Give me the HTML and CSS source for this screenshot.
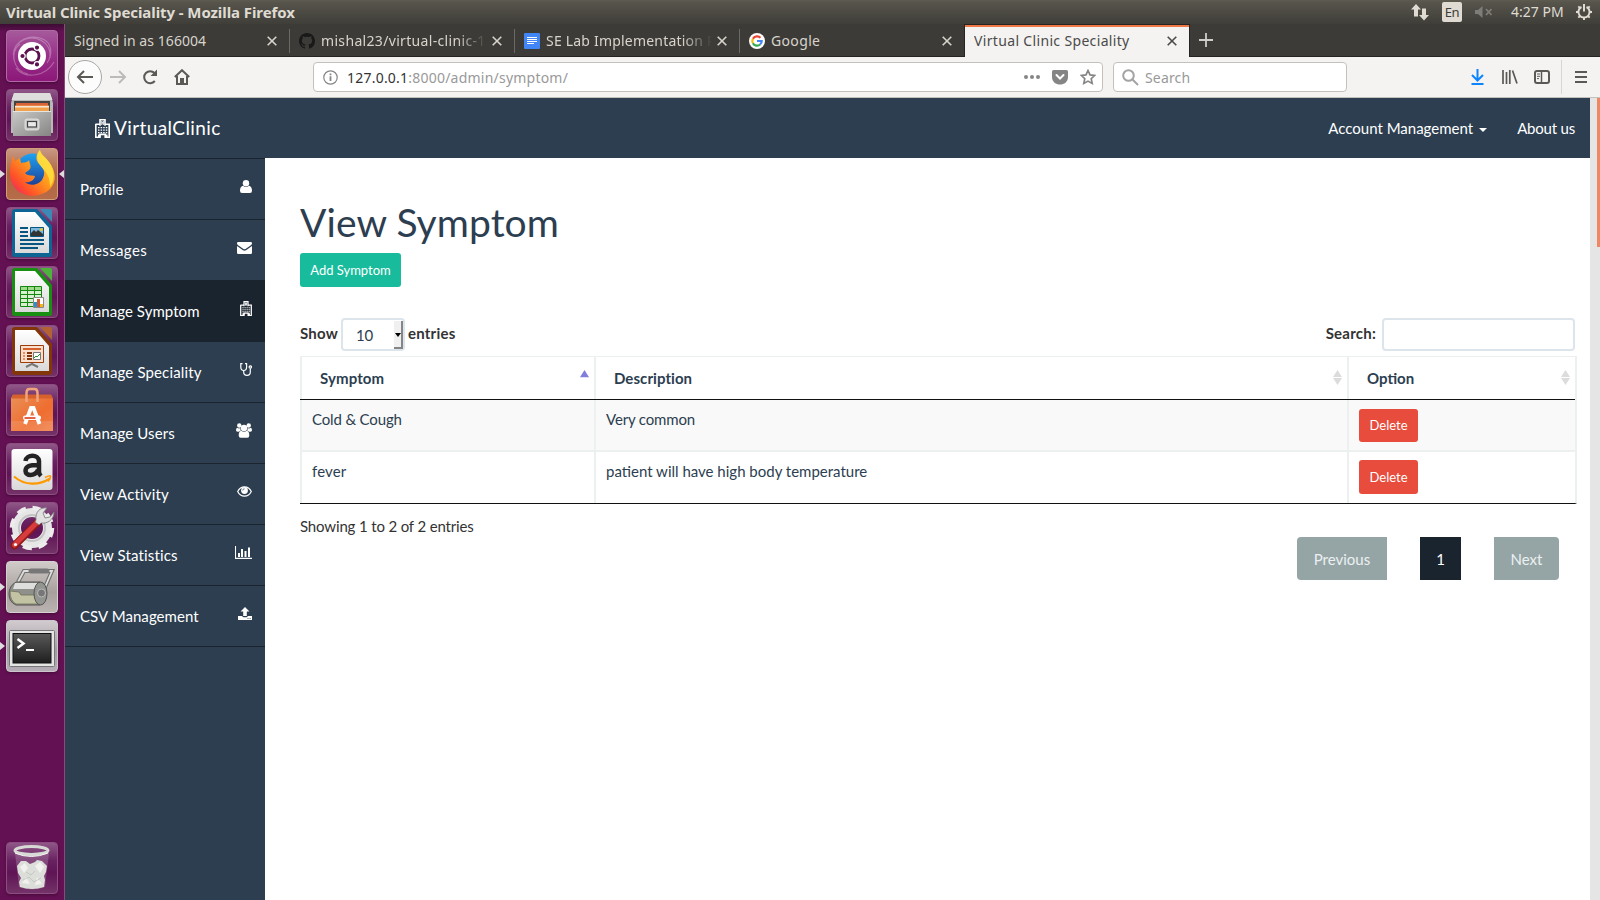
FILE: index.html
```html
<!DOCTYPE html>
<html lang="en">
<head>
<meta charset="utf-8">
<title>Virtual Clinic Speciality</title>
<link rel="stylesheet" href="styles.css">
</head>
<body>
<svg width="0" height="0" class="defs">
  <defs>
    <linearGradient id="gloss" x1="0" y1="0" x2="0" y2="1"><stop offset="0" stop-color="#fff"/><stop offset="1" stop-color="#d9d9d9"/></linearGradient>
    <linearGradient id="steel" x1="0" y1="0" x2="1" y2="1"><stop offset="0" stop-color="#c9c9c7"/><stop offset="1" stop-color="#858583"/></linearGradient>
    <linearGradient id="fox" x1="1" y1="0" x2="0" y2="1"><stop offset="0" stop-color="#ffe43a"/><stop offset=".45" stop-color="#ff9a1c"/><stop offset=".75" stop-color="#ff4f2a"/><stop offset="1" stop-color="#e6177d"/></linearGradient>
    <linearGradient id="globe" x1="0" y1="0" x2="0" y2="1"><stop offset="0" stop-color="#1fa3f3"/><stop offset="1" stop-color="#1b2f86"/></linearGradient>
    <linearGradient id="bag" x1="0" y1="0" x2="1" y2="1"><stop offset="0" stop-color="#e8925a"/><stop offset=".6" stop-color="#ef6d2f"/><stop offset="1" stop-color="#ee7f4b"/></linearGradient>
    <linearGradient id="screen" x1="0" y1="0" x2="0" y2="1"><stop offset="0" stop-color="#595959"/><stop offset="1" stop-color="#1f1f1f"/></linearGradient>
    <symbol id="x" viewBox="0 0 10 10"><path d="M.7.7l8.6 8.6M9.3.7L.7 9.3" fill="none" stroke="currentColor" stroke-width="1.6"/></symbol>
    <symbol id="hospital" viewBox="0 0 15 19">
      <path d="M.8 5.2h4M10.2 5.2h4v13.2h-4v-3H5v3H.8V4.8M5 6.800V.8h5v6" fill="none" stroke="currentColor" stroke-width="1.6"/>
      <path d="M6.300 2h.9v1.300h.7V2h.9v4h-.9V4.400h-.7V6h-.9zM3 8h1.500v1.300H3zm2.600 0h1.500v1.300H5.600zm2.600 0h1.500v1.300H8.200zm2.600 0h1.500v1.300h-1.500zM3 10.500h1.500v1.300H3zm2.600 0h1.500v1.300H5.600zm2.600 0h1.500v1.300H8.200zm2.600 0h1.500v1.300h-1.500zM3 13h1.500v1.300H3zm2.600 0h1.500v1.300H5.600zm2.600 0h1.500v1.300H8.200zm2.600 0h1.500v1.300h-1.500zM3 15.500h2.500v2.500H3zm7 0h2.500v2.500H10z" fill="currentColor"/>
    </symbol>
  </defs>
</svg>

<header class="panel">
  <span class="panel-title">Virtual Clinic Speciality - Mozilla Firefox</span>
  <div class="indicators">
    <svg class="i-net" width="18" height="17" viewBox="0 0 18 17" fill="#dfdbd2"><path d="M5 0l5 5.500H7v7H3v-7H0zM13 16.500l5-5.500h-3V4.500h-4V11H8z"/></svg>
    <span class="i-lang">En</span>
    <svg class="i-vol" width="18" height="12" viewBox="0 0 18 12"><path d="M0 4h3l4.500-4v12L3 8H0z" fill="#7f7d77"/><path d="M11 3l5.500 6M16.500 3L11 9" stroke="#7f7d77" stroke-width="1.800"/></svg>
    <span class="i-time">4:27 PM</span>
    <svg class="i-gear" width="16" height="16" viewBox="0 0 16 16" fill="none" stroke="#dfdbd2"><path d="M5.500 3A5.600 5.600 0 1 0 10.500 3" stroke-width="2"/><path d="M8 0v7.500" stroke-width="2"/><path d="M2.300 2.300l1.900 1.900M13.700 2.300l-1.900 1.900M0 8h2.500M16 8h-2.500M2.300 13.700l1.900-1.900M13.700 13.700l-1.900-1.900M8 16v-2.500" stroke-width="1.900"/></svg>
  </div>
</header>

<div class="desktop">
  <nav class="launcher">
    <div class="tile ubuntu"><svg viewBox="0 0 52 52"><g fill="none" stroke="#fff" stroke-opacity=".28" stroke-width="1.200"><path d="M8 30C4 14 20 4 34 8s12 18 7 25M14 12c14-10 32 0 30 16M10 38c10 12 30 8 38-6M22 44c-16-4-18-22-8-30"/></g><circle cx="26" cy="26" r="14" fill="#fff"/><circle cx="26" cy="26" r="7" fill="none" stroke="#5c1150" stroke-width="2.800"/><g fill="#5c1150" stroke="#fff" stroke-width="1.200"><circle cx="16.500" cy="26" r="2.700"/><circle cx="31" cy="17.600" r="2.700"/><circle cx="31" cy="34.400" r="2.700"/></g></svg></div>
    <div class="tile"><svg viewBox="0 0 52 52"><path d="M8 4h36l3 10v30H5V14z" fill="#b8b8b6"/><path d="M8 4h36l2.500 7h-41z" fill="#dededc"/><path d="M8 12h36v10H8z" fill="#444"/><path d="M10 14h32v8H10z" fill="#d9643a"/><path d="M9 16.500h34V22H9z" fill="#f2a24b"/><path d="M9 17h34v1.500H9z" fill="#f9e6d4"/><path d="M7 22h38v25H7z" fill="url(#steel)"/><path d="M7 22h38v1H7z" fill="#e5e5e3"/><rect x="19" y="30" width="14" height="11" rx="2" fill="#ccc" stroke="#e8e8e8" stroke-width=".8"/><rect x="21.500" y="32.500" width="9" height="5.500" fill="#e9e9e9" stroke="#444" stroke-width="1.200"/></svg></div>
    <div class="tile firefox"><i class="run left"></i><i class="run right"></i><svg viewBox="0 0 52 52"><circle cx="27" cy="24" r="18.500" fill="url(#globe)"/><path d="M7 8l2 5 5-3 1 5c4-1 6 0 8-3 1 5 3 7 0 10l-4 3c2 3 6 2 10 3-1 5-6 7-10 6 5 5 15 3 18-4 3-6 0-11-4-14-4-4-3-11 1-14 0 5 5 7 9 12 7 9 8 20 1 27-9 9-26 9-34 0C1 31 4 18 7 8z" fill="url(#fox)"/><path d="M34 2c1 5 6 7 9 12 6 9 6 18 1 25 0-8-2-12-5-16-4-5-12-12-5-21z" fill="#ffdf3f" opacity=".85"/></svg></div>
    <div class="tile"><svg viewBox="0 0 52 52"><path d="M9 2h22l15 17v28q0 3-3 3H9q-3 0-3-3V5q0-3 3-3z" fill="#0d6596"/><path d="M34 2h10q2 0 2 2v11z" fill="#3c89b5"/><path d="M9 5h20l14 16v25H9z" fill="url(#gloss)"/><path d="M14 21h8M14 25h8M14 29h8M14 33h24M14 37h24M14 41h18" stroke="#075581" stroke-width="2"/><path d="M24.500 20.500h13v9h-13z" fill="#7db8dc" stroke="#075581"/><path d="M25 29v-3l3-3 2 2 2-2 5 4v2z" fill="#333"/><circle cx="35.500" cy="22.500" r="1.500" fill="#f4c521"/></svg></div>
    <div class="tile"><svg viewBox="0 0 52 52"><path d="M9 2h22l15 17v28q0 3-3 3H9q-3 0-3-3V5q0-3 3-3z" fill="#188f11"/><path d="M34 2h10q2 0 2 2v11z" fill="#4cb33b"/><path d="M9 5h20l14 16v25H9z" fill="url(#gloss)"/><path d="M14.500 20.500h21v20h-21z" fill="#d8efd0"/><path d="M14.500 20.500h21v4h-21z" fill="#9edc8b"/><path d="M14.500 20.500h21v20h-21zM14.500 24.500h21M14.500 28.500h21M14.500 32.500h21M14.500 36.500h21M21.500 20.500v20M28.500 20.500v20" fill="none" stroke="#15860f"/><path d="M27.500 31.500h10v10h-10z" fill="#fff" stroke="#888"/><path d="M28 36h3v5h-3z" fill="#2b8fd0"/><path d="M31 33h3v8h-3z" fill="#d5592c"/><path d="M34 38h3v3h-3z" fill="#f2b713"/></svg></div>
    <div class="tile"><svg viewBox="0 0 52 52"><path d="M9 2h22l15 17v28q0 3-3 3H9q-3 0-3-3V5q0-3 3-3z" fill="#83360a"/><path d="M34 2h10q2 0 2 2v11z" fill="#b26233"/><path d="M9 5h20l14 16v25H9z" fill="url(#gloss)"/><path d="M26 37v2l-6 3M26 39l6 3" fill="none" stroke="#777" stroke-width="2"/><path d="M14.500 20.500h23v17h-23z" fill="#fbdfcf" stroke="#9b3e0b"/><path d="M17 24h18" stroke="#d5622a" stroke-width="2"/><path d="M17 28h2M17 31h2M17 34h2" stroke="#e68f64" stroke-width="2"/><path d="M21 28h5M21 31h5M21 34h5" stroke="#87360a" stroke-width="2"/><path d="M27.500 27.500h7v7h-7z" fill="#fff" stroke="#777"/><path d="M28 33l2-2 1 1 3-3" fill="none" stroke="#23902b"/></svg></div>
    <div class="tile"><svg viewBox="0 0 52 52"><path d="M7 11h38l2 4v32H5V14z" fill="url(#bag)"/><path d="M7 10.500h38l2 4H5z" fill="#d5622c"/><path d="M20.500 18V9q0-4 3-4h5q3 0 3 4v9" fill="none" stroke="#f0a47b" stroke-width="2.500"/><path d="M5 37h42v10H5z" fill="#fff" opacity=".12"/><path d="M19 40l6-16h2.500l6 16" fill="none" stroke="#fff" stroke-width="3.800"/><rect x="17" y="31.500" width="18" height="4.500" rx="2" fill="#fff"/><path d="M18.500 33.200h11v1.600h-11z" fill="#df3d18"/></svg></div>
    <div class="tile"><svg viewBox="0 0 52 52"><rect x="5.500" y="6" width="41" height="41" rx="3" fill="url(#gloss)"/><path d="M19.500 18c1-7 13-7 13.500 0v11c0 2 2 4 2 4M32 22c-8 0-12.500 1-12.500 6s9 6 12.500-1" fill="none" stroke="#242424" stroke-width="4.500"/><path d="M8 33.500c11 9.500 25 9 36 2" fill="none" stroke="#f90" stroke-width="2.200"/><path d="M39 34.500c4-2 5.500-2 5.500-1s-1 3.500-2.500 5" fill="none" stroke="#f90" stroke-width="1.500"/></svg></div>
    <div class="tile"><svg viewBox="0 0 52 52"><circle cx="26" cy="26" r="15.500" fill="none" stroke="#e6e6e6" stroke-width="9"/><circle cx="26" cy="26" r="20" fill="none" stroke="#ececec" stroke-width="4.500" stroke-dasharray="9 6.700"/><circle cx="26" cy="26" r="13" fill="none" stroke="#c4c4c4" stroke-width="2"/><path d="M8.500 43.500L32 20" stroke="#8f1717" stroke-width="7.500" stroke-linecap="round"/><path d="M8.500 43L32 19.500" stroke="#d63c3c" stroke-width="5" stroke-linecap="round"/><circle cx="9.500" cy="42.500" r="1.600" fill="#fff"/><path d="M30 18c-1-8 4-13 11-12l-4 5 2 5 5-1 4-5c0 8-7 12-13 11l-2 2-4-3z" fill="#e1e1e1" stroke="#777" stroke-width=".8"/></svg></div>
    <div class="tile pale"><i class="run left"></i><svg viewBox="0 0 52 52"><path d="M12 21l6-11h28L37 31" fill="none" stroke="#70706e" stroke-width="4"/><path d="M12 21l6-11h28L37 31" fill="none" stroke="#ddd" stroke-width="1.800"/><path d="M25 10h16" stroke="#777" stroke-width="5" stroke-linecap="round"/><path d="M10 21h24v23H10q-7-3-7-11t7-12z" fill="#8f908b" stroke="#555"/><path d="M9 22h23v6H7z" fill="#fff" opacity=".7"/><path d="M4 30l9 1 2 3h18v9H10q-6-3-6-13z" fill="#c2c3a2" stroke="#6f705b" stroke-width=".8"/><ellipse cx="34.500" cy="32.500" rx="6.500" ry="11.500" fill="#929590" stroke="#555"/><circle cx="35.500" cy="32" r="4" fill="#777" stroke="#bbb"/></svg></div>
    <div class="tile grey"><i class="run left"></i><svg viewBox="0 0 52 52"><rect x="3.500" y="10.500" width="45" height="36" rx="1" fill="#e5e5e3" stroke="#777"/><rect x="7" y="13.500" width="38" height="29.500" fill="url(#screen)" stroke="#111"/><path d="M11.500 19l6 4.500-6 4.500" fill="none" stroke="#fff" stroke-width="2.500"/><path d="M20 30h8" stroke="#fff" stroke-width="2"/></svg></div>
    <div class="tile trash"><svg viewBox="0 0 52 52"><path d="M9 11h34l-4 34q-13 5-26 0z" fill="#fff" opacity=".18"/><path d="M11 24l4-5 5 0 4 3 5-2 2-2 5 1 3 3 2 2-1 6-2 4 1 4-1 7q-12 4-24 0l-1-5 2-4-3-5z" fill="#dcded9"/><path d="M14 25l5-4 3 5-4 5zM29 24l5-4 4 5-4 6zM16 41l4-6 4 7zM29 43l2-8 5 7z" fill="#f1f2ef"/><path d="M20 30l5 3 4-4M17 38l6-3 5 5 7-4" fill="none" stroke="#bfc2bb" stroke-width=".8"/><ellipse cx="25.500" cy="8.500" rx="16.500" ry="4" fill="none" stroke="#d7d9d5" stroke-width="3"/><path d="M9 11q16 7 33 0" fill="none" stroke="#f6f6f4"/></svg></div>
  </nav>

  <div class="window">
    <div class="tabs">
      <div class="tab"><span class="tt t1">Signed in as 166004</span><svg class="close"><use href="#x"/></svg></div>
      <div class="tab"><svg class="fav" viewBox="0 0 16 16"><path fill="#191919" fill-rule="evenodd" d="M8 0C3.580 0 0 3.580 0 8c0 3.540 2.290 6.530 5.470 7.590.4.070.550-.170.550-.380 0-.190-.010-.820-.010-1.490-2.010.370-2.530-.490-2.690-.940-.090-.230-.480-.940-.820-1.130-.280-.150-.680-.520-.010-.530.630-.010 1.080.580 1.230.820.720 1.210 1.870.870 2.330.660.070-.520.280-.870.510-1.070-1.780-.200-3.640-.890-3.640-3.950 0-.870.310-1.590.820-2.150-.080-.200-.360-1.020.080-2.120 0 0 .670-.210 2.200.820.640-.180 1.320-.270 2-.270s1.360.090 2 .270c1.530-1.040 2.200-.820 2.200-.820.440 1.100.160 1.920.080 2.120.510.560.820 1.270.820 2.150 0 3.070-1.870 3.750-3.650 3.950.290.250.540.730.540 1.480 0 1.070-.010 1.930-.010 2.200 0 .210.150.460.550.380A8.010 8.010 0 0 0 16 8c0-4.420-3.580-8-8-8z"/></svg><span class="tt t2 fade">mishal23/virtual-clinic-1</span><svg class="close"><use href="#x"/></svg></div>
      <div class="tab"><svg class="fav" viewBox="0 0 16 16"><rect width="16" height="16" rx="1" fill="#4285f4"/><path d="M3 4.500h10M3 6.500h10M3 8.500h10M3 10.500h7" stroke="#fff" stroke-width="1.100"/></svg><span class="tt t3 fade">SE Lab Implementation P</span><svg class="close"><use href="#x"/></svg></div>
      <div class="tab last"><svg class="fav" viewBox="0 0 16 16"><circle cx="8" cy="8" r="8" fill="#fff"/><g fill="none" stroke-width="2.200"><path d="M11.500 4.800A4.700 4.700 0 0 0 3.900 5.800" stroke="#ea4335"/><path d="M3.900 5.700a4.700 4.700 0 0 0 0 4.600" stroke="#fbbc05"/><path d="M3.900 10.200a4.700 4.700 0 0 0 7.200 1.300" stroke="#34a853"/><path d="M11.100 11.500A4.700 4.700 0 0 0 12.700 8H8" stroke="#4285f4"/></g></svg><span class="tt t4">Google</span><svg class="close"><use href="#x"/></svg></div>
      <div class="tab active"><span class="tt t5">Virtual Clinic Speciality</span><svg class="close"><use href="#x"/></svg></div>
      <svg class="plus" width="14" height="14" viewBox="0 0 14 14"><path d="M7 0v14M0 7h14" stroke="#d0cec8" stroke-width="1.800"/></svg>
    </div>

    <div class="toolbar">
      <span class="back"><svg width="18" height="14" viewBox="0 0 18 14" fill="none" stroke="#5a5955" stroke-width="2"><path d="M17 7H2M8 1L2 7l6 6"/></svg></span>
      <svg class="fwd" width="18" height="14" viewBox="0 0 18 14" fill="none" stroke="#bcbbb9" stroke-width="2"><path d="M0 7h15M9 1l6 6-6 6"/></svg>
      <svg class="reload" width="16" height="16" viewBox="0 0 16 16"><path d="M12.800 12A6 6 0 1 1 12.500 4" fill="none" stroke="#5a5955" stroke-width="2"/><path d="M15 .5V7H8.500z" fill="#5a5955"/></svg>
      <svg class="home" width="16" height="16" viewBox="0 0 16 16"><path d="M.8 8L8 1.200 15.200 8M3 7v8h10V7" fill="none" stroke="#5a5955" stroke-width="2"/><path d="M6 9h4v6H6z" fill="#5a5955"/></svg>
      <div class="urlbar">
        <svg class="info" width="15" height="15" viewBox="0 0 15 15"><circle cx="7.500" cy="7.500" r="6.700" fill="none" stroke="#858585" stroke-width="1.200"/><path d="M6.600 6.300h1.800V11H6.600zM6.600 3.500h1.800v1.700H6.600z" fill="#858585"/></svg>
        <span class="url"><b>127.0.0.1</b>:8000/admin/symptom/</span>
        <svg class="dots" width="16" height="4" viewBox="0 0 16 4" fill="#858585"><circle cx="2" cy="2" r="2"/><circle cx="8" cy="2" r="2"/><circle cx="14" cy="2" r="2"/></svg>
        <svg class="pocket" width="16" height="15" viewBox="0 0 16 15"><path d="M1.500 0h13Q16 0 16 1.500V7c0 10-16 10-16 0V1.500Q0 0 1.500 0z" fill="#858585"/><path d="M4.500 5L8 8.500 11.500 5" fill="none" stroke="#fff" stroke-width="2" stroke-linecap="round"/></svg>
        <svg class="star" width="16" height="16" viewBox="0 0 16 16"><path d="M8 1.500l2 4.400 4.700.5-3.500 3.300 1 4.700L8 12.100l-4.200 2.300 1-4.700L1.300 6.400 6 5.900z" fill="none" stroke="#858585" stroke-width="1.700"/></svg>
      </div>
      <div class="searchbar"><svg width="17" height="17" viewBox="0 0 17 17" fill="none" stroke="#a3a3a3" stroke-width="2"><circle cx="6.500" cy="6.500" r="5.300"/><path d="M10.500 10.500l5.500 5.500"/></svg><span>Search</span></div>
      <div class="tools">
        <svg class="dl" width="13" height="16" viewBox="0 0 13 16" fill="none" stroke="#0a84ff" stroke-width="2"><path d="M6.500 0v11M1 6l5.500 5.500L12 6M.5 15h12"/></svg>
        <svg class="lib" width="16" height="14" viewBox="0 0 16 14" stroke="#5a5955" stroke-width="1.700"><path d="M1 0v14M4.500 2v12M7.800 0v14M10.500.5l4.500 13"/></svg>
        <svg class="side" width="16" height="14" viewBox="0 0 16 14"><rect x="1" y="1" width="14" height="12" rx="2" fill="none" stroke="#5a5955" stroke-width="2"/><path d="M7.500 1v12" stroke="#5a5955" stroke-width="1.500"/><path d="M3 4h3M3 6.300h3M3 8.600h2" stroke="#5a5955"/></svg>
        <i class="divider"></i>
        <svg class="menu" width="12" height="12" viewBox="0 0 12 12"><path d="M0 1h12M0 6h12M0 11h12" stroke="#5a5955" stroke-width="2"/></svg>
      </div>
    </div>

    <div class="viewport">
      <div class="page">
        <div class="navbar">
          <div class="brand"><svg width="15" height="19"><use href="#hospital"/></svg><span>VirtualClinic</span></div>
          <div class="navlinks"><span>Account Management<i class="caret"></i></span><span class="about">About us</span></div>
        </div>
        <div class="body">
          <aside class="sidebar">
            <ul>
              <li><span class="w1">Profile</span><svg width="12" height="13" viewBox="0 0 12 13" fill="#fff"><circle cx="6" cy="3.300" r="3.200"/><path d="M3 5.800Q6 8.200 9 5.800c2.500.4 3 3 3 5q0 2.200-2 2.200H2q-2 0-2-2.200c0-2 .5-4.600 3-5z"/></svg></li>
              <li><span class="w4">Messages</span><svg width="15" height="12" viewBox="0 0 15 12" fill="#fff"><path d="M0 1.200Q0 0 1.200 0h12.600Q15 0 15 1.200 15 2.500 13.500 3.600L8.500 7q-1 .6-2 0l-5-3.400Q0 2.500 0 1.200z"/><path d="M0 4l6 4.200q1.500.9 3 0L15 4v6.700q0 1.300-1.300 1.300H1.300Q0 12 0 10.700z"/></svg></li>
              <li class="current"><span class="w0">Manage Symptom</span><svg width="12" height="15"><use href="#hospital"/></svg></li>
              <li><span class="w2">Manage Speciality</span><svg width="12" height="13" viewBox="0 0 12 13" fill="none" stroke="#fff" stroke-width="1.200"><path d="M2.500.7H.8V4q0 3.500 2.900 3.500T6.600 4V.7H5M3.700 7.500V9q0 3.300 3.300 3.300T10.300 9V5.500"/><circle cx="10.300" cy="4" r="1.200"/></svg></li>
              <li><span class="w1">Manage Users</span><svg width="16" height="15" viewBox="0 0 16 15" fill="#fff"><circle cx="3.300" cy="2.500" r="2.200"/><circle cx="12.700" cy="2.500" r="2.200"/><circle cx="8" cy="5" r="3.200"/><path d="M1 4.800q2 1 3.300.3Q4.200 7 5 7.600 3.500 8 3 8.700H1.500Q0 8.700 0 7.300 0 5.500 1 4.800zM15 4.800q-2 1-3.300.3.100 1.900-.7 2.500 1.500.4 2 1.100h1.500q1.500 0 1.500-1.400 0-1.800-1-2.500zM5.300 7.800q2.700 2 5.400 0c2 .1 2.600 2.500 2.600 4.700q0 2.300-2 2.300H4.700q-2 0-2-2.300c0-2.200.6-4.600 2.600-4.700z"/></svg></li>
              <li><span class="w2">View Activity</span><svg width="15" height="11" viewBox="0 0 15 11"><path d="M.7 5.500Q3 .8 7.500.8t6.800 4.700Q12 10.200 7.500 10.200T.7 5.500z" fill="none" stroke="#fff" stroke-width="1.200"/><circle cx="7.500" cy="4.500" r="3.400" fill="#fff"/><path d="M5.700 4.500q0-1.700 1.800-1.700" fill="none" stroke="#2c3e50" stroke-width=".7"/></svg></li>
              <li><span class="w2">View Statistics</span><svg width="17" height="13" viewBox="0 0 17 13"><path d="M.5 0v12.400H17" fill="none" stroke="#fff" stroke-width="1.100"/><path d="M4 11V7M7 11V3M10.500 11V5M14 11V1.500" stroke="#fff" stroke-width="2"/></svg></li>
              <li><span class="w0">CSV Management</span><svg width="14" height="13" viewBox="0 0 14 13"><path d="M7 0l4.500 4.500H8.800V9H5.200V4.500H2.500z" fill="#fff"/><path d="M0 9h4.200q.5 1.300 1.500 1.300h2.600q1 0 1.500-1.300H14v4H0z" fill="#fff"/><path d="M9.500 11.500h1M11.600 11.500h1" stroke="#2c3e50" stroke-width=".8"/></svg></li>
            </ul>
          </aside>
          <main class="content">
            <h1>View Symptom</h1>
            <a class="btn add">Add Symptom</a>
            <div class="controls">
              <label class="length">Show<span class="select">10<i></i></span>entries</label>
              <label class="filter">Search:<span class="field"></span></label>
            </div>
            <div class="table">
              <div class="row head"><div><span class="w1">Symptom</span><i class="sort asc"></i></div><div><span class="w0">Description</span><i class="sort both"></i></div><div>Option<i class="sort both"></i></div></div>
              <div class="row odd"><div class="tight">Cold &amp; Cough</div><div class="tight">Very common</div><div><a class="btn del">Delete</a></div></div>
              <div class="row even"><div class="w1">fever</div><div>patient will have high body temperature</div><div><a class="btn del">Delete</a></div></div>
            </div>
            <div class="foot">
              <span class="showing tight">Showing 1 to 2 of 2 entries</span>
              <div class="pager"><span class="prev">Previous</span><span class="cur">1</span><span class="next">Next</span></div>
            </div>
          </main>
        </div>
      </div>
      <div class="scroll"><i></i></div>
    </div>
  </div>
</div>
</body>
</html>
```
FILE: styles.css
```css
* { box-sizing: border-box; }
body { margin: 0; width: 1600px; height: 900px; overflow: hidden; display: flex; flex-direction: column; font-family: "Noto Sans", sans-serif; font-size: 14px; }
svg { display: block; flex: none; }
.defs { position: absolute; }

/* Text tracking steps */
.w0 { letter-spacing: .06px; }
.w1 { letter-spacing: .12px; }
.w2 { letter-spacing: .14px; }
.w4 { letter-spacing: .36px; }
.tight { letter-spacing: -.15px; }

.panel { height: 24px; flex: none; display: flex; justify-content: space-between; align-items: center; padding: 0 8px 0 6px; background: linear-gradient(#5e5b50, #55534a 15%, #3f3e39); color: #dfdbd2; }
.panel-title { font: bold 15px/24px "Noto Sans", sans-serif; letter-spacing: -.08px; white-space: nowrap; }
.indicators { display: flex; align-items: center; }
.i-lang { width: 20px; height: 20px; margin: 0 13px 0 13px; border-radius: 2px; background: #dfdbd2; color: #3c3b37; font-size: 13px; line-height: 21px; text-align: center; letter-spacing: -.5px; }
.i-time { width: 53px; margin: 0 12px 0 18px; padding-bottom: 2px; white-space: nowrap; letter-spacing: 0; }

.desktop { flex: 1; min-height: 0; display: flex; }
.launcher { width: 65px; flex: none; display: flex; flex-direction: column; gap: 7px; padding: 6px 0 6px 6px; background: linear-gradient(#3c0c34, #641153 8px); border-right: 1px solid #8b4a7e; }
.tile { position: relative; width: 52px; height: 52px; flex: none; border-radius: 4px; border: 1px solid #8d4c82; background: linear-gradient(#8f5787, #692261 35%, #601455 60%, #733368); box-shadow: 0 1px 3px rgba(30,0,25,.45); }
.tile svg { width: 52px; height: 52px; margin: -1px; }
.ubuntu { background: linear-gradient(#a55a9b, #99308a 50%, #8c1879); border-color: #b169a5; }
.firefox { background: linear-gradient(#c89783, #ad6541 50%, #b76c49); border-color: #d0a07b; }
.pale { background: linear-gradient(#d0cbc9, #a8a09d 60%, #bab3b1); border-color: #d6d0d0; }
.grey { background: linear-gradient(#d1cbd0, #a19ba2 60%, #b6aeb6); border-color: #cdc5cc; }
.trash { margin-top: auto; }
.run { position: absolute; top: 21px; border: 4px solid transparent; }
.run.left { left: -7px; border-left: 5px solid #ddd; border-right: 0; }
.run.right { left: 52px; border-right: 5px solid #ddd; border-left: 0; }

.window { flex: 1; min-width: 0; display: flex; flex-direction: column; }
.tabs { height: 33px; flex: none; display: flex; background: #3c3b37; box-shadow: inset 0 -1px #252422; color: #d8d4cc; }
.tab { width: 225px; display: flex; align-items: center; padding: 1px 12px 0 9px; border-right: 1px solid transparent; background: linear-gradient(#6b6965, #6b6965) 224px 5px / 1px 24px no-repeat; background-origin: border-box; }
.tab.last { background: none; }
.fav { width: 16px; height: 16px; margin-right: 6px; }
.tt { flex: 1; min-width: 0; overflow: hidden; white-space: nowrap; font-size: 14px; line-height: 24px; }
.t1 { letter-spacing: .07px; }
.t2 { letter-spacing: .33px; }
.t3 { letter-spacing: .2px; }
.t4 { letter-spacing: .35px; }
.t5 { letter-spacing: .34px; }
.fade { -webkit-mask-image: linear-gradient(90deg, #000 82%, transparent); mask-image: linear-gradient(90deg, #000 82%, transparent); margin-right: -3px; }
.close { width: 10px; height: 10px; margin-left: 8px; }
.tab.active { border: 1px solid #252422; border-bottom: 0; background: #f4f3f2; box-shadow: inset 0 2px #f07746; color: #4b4a48; width: 226px; margin-left: -1px; padding-top: 0; }
.plus { margin: 9px 0 0 9px; }

.toolbar { height: 41px; flex: none; display: flex; align-items: center; padding: 0 13px 0 3px; background: #f4f3f2; border-bottom: 1px solid #c3c1be; }
.back { width: 34px; height: 34px; display: flex; align-items: center; justify-content: center; border: 1px solid #a8a7a4; border-radius: 50%; background: #fcfcfc; }
.fwd { margin-left: 8px; }
.reload { margin-left: 14px; }
.home { margin-left: 16px; }
.urlbar { width: 790px; height: 30px; margin-left: 123px; display: flex; align-items: center; padding: 0 6px 0 9px; background: #fff; border: 1px solid #c4c1bd; border-radius: 4px; }
.url { flex: 1; margin-left: 9px; color: #999; white-space: nowrap; letter-spacing: .22px; }
.url b { font-weight: 400; color: #333; }
.dots { margin-right: 12px; }
.pocket { margin-right: 12px; }
.searchbar { width: 234px; height: 30px; margin-left: 10px; display: flex; align-items: center; gap: 6px; padding-left: 8px; background: #fff; border: 1px solid #c4c1bd; border-radius: 4px; color: #999; letter-spacing: .15px; }
.tools { flex: 1; display: flex; align-items: center; justify-content: flex-end; }
.lib { margin-left: 18px; }
.side { margin-left: 16px; }
.divider { width: 1px; height: 34px; margin: 0 13px 0 11px; background: #d8d6d4; }

.viewport { flex: 1; min-height: 0; display: flex; }
.page { flex: 1; min-width: 0; display: flex; flex-direction: column; background: #fff; font: 15px/1.43 Lato, sans-serif; color: #2c3e50; }
.navbar { height: 60px; flex: none; display: flex; justify-content: space-between; align-items: center; padding: 0 15px 0 30px; background: #2c3e50; color: #fff; }
.brand { display: flex; align-items: center; gap: 4px; font-size: 19px; letter-spacing: .4px; }
.navlinks { display: flex; gap: 30px; padding-top: 2px; }
.about { letter-spacing: -.2px; }
.caret { display: inline-block; margin-left: 6px; vertical-align: middle; border: 4px solid transparent; border-top-color: #fff; border-bottom: 0; }
.body { flex: 1; min-height: 0; display: flex; }
.sidebar { width: 200px; flex: none; background: #2c3e50; color: #fff; }
.sidebar ul { list-style: none; margin: 0; padding: 0; border-top: 1px solid #1a242f; }
.sidebar li { height: 61px; display: flex; justify-content: space-between; align-items: center; padding: 1px 13px 0 15px; border-bottom: 1px solid #1a242f; }
.sidebar li svg { margin-bottom: 6px; }
.sidebar .current { background: #1a242f; }
.content { width: 1310px; padding: 43px 0 0 35px; }
h1 { margin: 0; font-size: 39px; font-weight: 400; line-height: 43px; letter-spacing: .08px; }
.btn { display: block; border-radius: 3px; color: #fff; font-size: 13px; text-align: center; letter-spacing: 0; }
.add { width: 101px; height: 34px; margin-top: 9px; line-height: 34px; background: #18bc9c; }
.controls { height: 33px; margin-top: 31px; display: flex; justify-content: space-between; color: #333; font-weight: 700; line-height: 31px; letter-spacing: .22px; }
.length, .filter { display: flex; }
.select { position: relative; width: 64px; height: 33px; margin: 0 3px; padding-left: 13px; border: 2px solid #dce4ec; border-radius: 4px; font-weight: 400; color: #2c3e50; background: #fff; line-height: 30px; letter-spacing: -.3px; }
.select i { position: absolute; right: 0; top: 1px; width: 9px; height: 28px; background: #f0f0f0; border-right: 2px solid #858585; border-bottom: 2px solid #858585; }
.select i::after { content: ""; position: absolute; left: 1px; top: 12px; border: 3px solid transparent; border-top: 4px solid #000; border-bottom: 0; }
.field { width: 193px; height: 33px; margin-left: 6px; border: 2px solid #dce4ec; border-radius: 4px; }
.table { width: 1277px; margin-top: 5px; border: 1px solid #ecf0f1; border-width: 1px 2px 0 0; border-bottom: 1px solid #111; }
.row { display: grid; grid-template-columns: 294px 753px 228px; }
.row > div { border-left: 2px solid #ecf0f1; padding: 9px 10px; }
.head { height: 43px; border-bottom: 1px solid #111; font-weight: 700; }
.head > div { display: flex; justify-content: space-between; padding: 11px 5px 0 18px; }
.odd { height: 52px; background: #f9f9f9; border-bottom: 2px solid #ecf0f1; }
.even { height: 51px; }
.del { width: 59px; height: 33px; line-height: 33px; background: #e74c3c; }
.even .del { height: 34px; margin-top: -1px; line-height: 35px; }
.sort { width: 9px; height: 15px; margin-top: 2px; background: #dcdcdc; clip-path: polygon(50% 0, 100% 46%, 0 46%, 0 54%, 100% 54%, 50% 100%, 0 54%, 0 46%); }
.asc { background: #8080dc; clip-path: polygon(50% 0, 100% 48%, 0 48%); }
.foot { width: 1277px; display: flex; justify-content: space-between; color: #333; }
.showing { padding-top: 12px; }
.pager { display: flex; gap: 33px; margin: 33px 18px 0 0; }
.pager span { height: 43px; line-height: 45px; text-align: center; background: #95a5a6; color: #ecf0f1; }
.pager .prev { width: 90px; border-radius: 4px 0 0 4px; }
.pager .cur { width: 41px; background: #1a242f; color: #fff; }
.pager .next { width: 65px; border-radius: 0 4px 4px 0; }
.scroll { width: 10px; background: #e5e5e5; padding-left: 7px; }
.scroll i { display: block; width: 3px; height: 149px; background: #f08763; }
```
